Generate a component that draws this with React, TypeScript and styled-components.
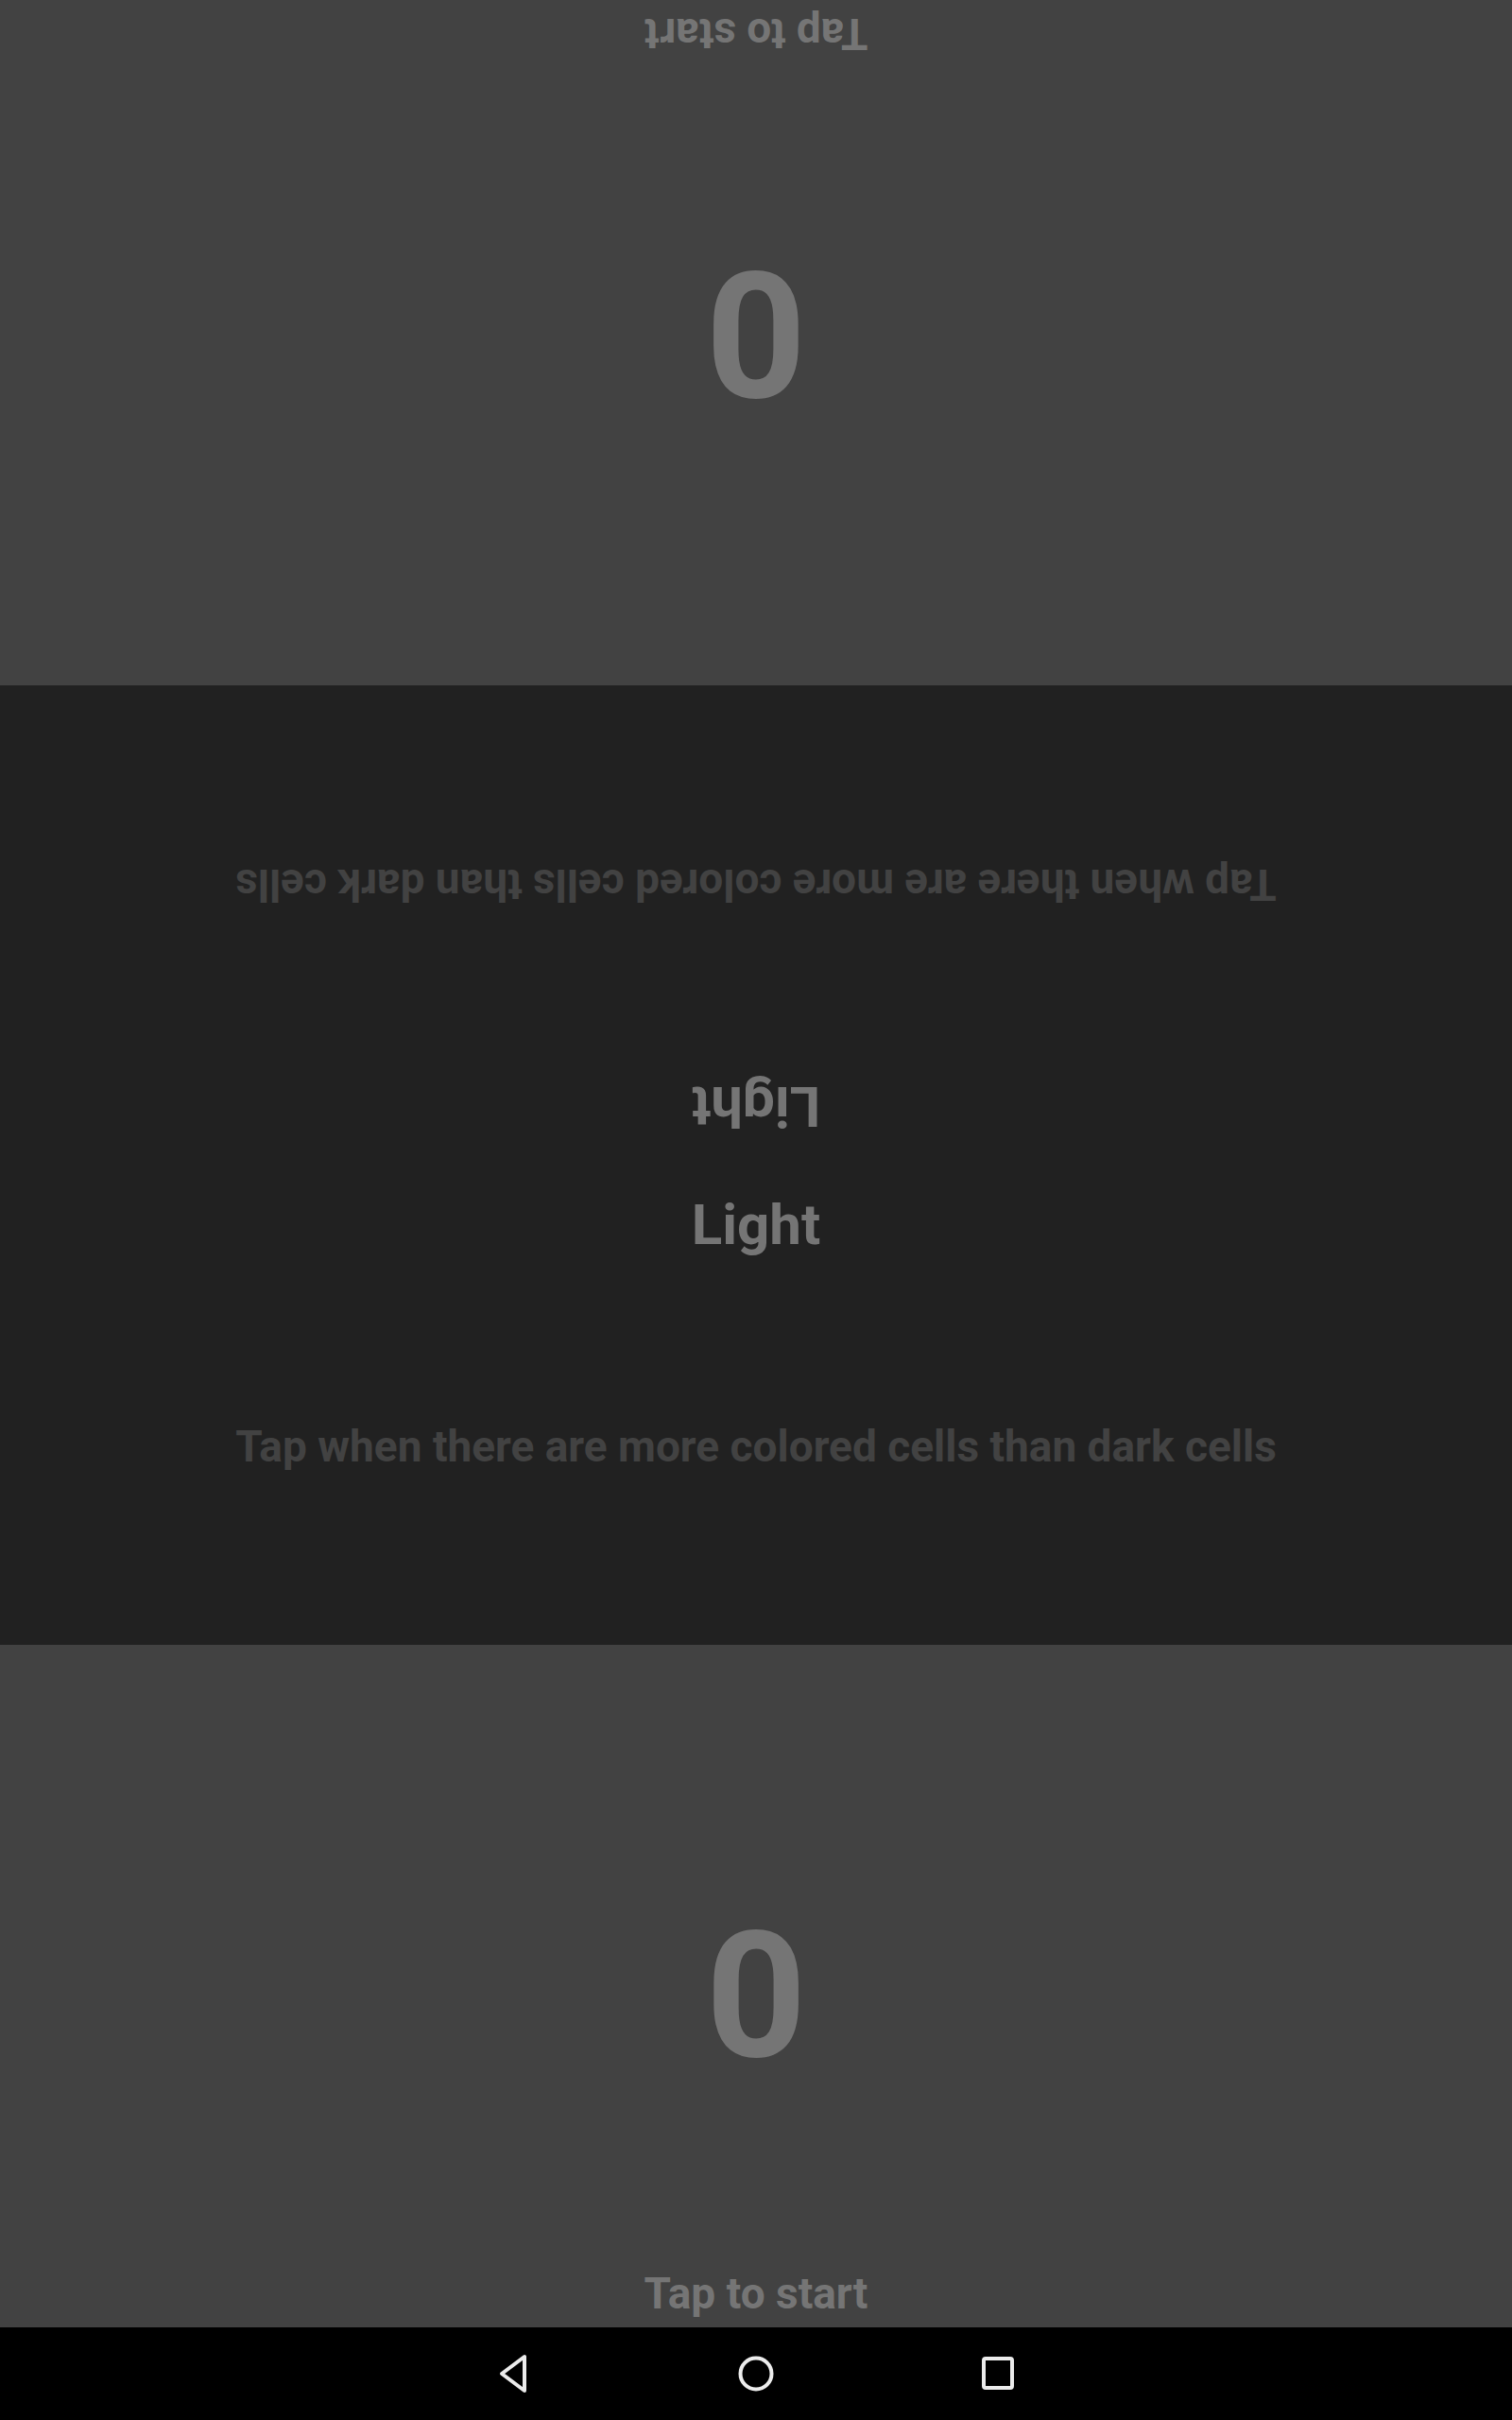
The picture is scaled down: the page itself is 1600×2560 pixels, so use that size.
import React from 'react';
import styled, { createGlobalStyle } from 'styled-components';

const GlobalStyle = createGlobalStyle`
  html, body {
    margin: 0;
    padding: 0;
    background: #000;
  }
  body {
    font-family: Roboto, "Noto Sans", "Liberation Sans", sans-serif;
  }
`;

const Screen = styled.div`
  width: 1600px;
  height: 2560px;
  display: flex;
  flex-direction: column;
  overflow: hidden;
`;

const PlayerPanel = styled.div<{ flipped?: boolean; size: number }>`
  height: ${p => p.size}px;
  flex-shrink: 0;
  box-sizing: border-box;
  background: #424242;
  display: grid;
  grid-template-rows: 1fr auto 1fr;
  justify-items: center;
  padding-top: 20px;
  transform: ${p => (p.flipped ? 'rotate(180deg)' : 'none')};
`;

const Score = styled.div`
  grid-row: 2;
  font-size: 186px;
  font-weight: 700;
  color: #757575;
  line-height: normal;
`;

const StartHint = styled.div`
  grid-row: 3;
  align-self: end;
  padding-bottom: 9px;
  font-size: 46px;
  font-weight: 700;
  color: #757575;
`;

const Board = styled.div`
  height: 1015px;
  flex-shrink: 0;
  background: #212121;
  display: flex;
  flex-direction: column;
`;

const BoardHalf = styled.div<{ flipped?: boolean }>`
  flex: 1;
  display: flex;
  flex-direction: column;
  align-items: center;
  padding-top: 27px;
  transform: ${p => (p.flipped ? 'rotate(180deg)' : 'none')};
`;

const Mode = styled.div`
  font-size: 60px;
  font-weight: 700;
  color: #757575;
`;

const Instruction = styled.div`
  margin-top: 172px;
  font-size: 46px;
  font-weight: 700;
  color: #424242;
  white-space: nowrap;
`;

const NavBar = styled.div`
  height: 98px;
  flex-shrink: 0;
  background: #000;
  display: flex;
  justify-content: center;
  align-items: center;
`;

const NavButton = styled.div`
  width: 256px;
  height: 98px;
  display: flex;
  align-items: center;
  justify-content: center;
`;

const NavIcon = styled.svg`
  width: 44px;
  height: 44px;
  fill: none;
  stroke: #ececec;
  stroke-width: 4;
  stroke-linejoin: round;
`;

function Player({ flipped, size }: { flipped?: boolean; size: number }) {
  return (
    <PlayerPanel flipped={flipped} size={size}>
      <Score>0</Score>
      <StartHint>Tap to start</StartHint>
    </PlayerPanel>
  );
}

function Half({ flipped }: { flipped?: boolean }) {
  return (
    <BoardHalf flipped={flipped}>
      <Mode>Light</Mode>
      <Instruction>Tap when there are more colored cells than dark cells</Instruction>
    </BoardHalf>
  );
}

export default function App() {
  return (
    <>
      <GlobalStyle />
      <Screen>
        <Player flipped size={725} />
        <Board>
          <Half flipped />
          <Half />
        </Board>
        <Player size={722} />
        <NavBar>
          <NavButton>
            <NavIcon viewBox="0 0 44 44">
              <path d="M33 4 L33 40 L9 22 Z" />
            </NavIcon>
          </NavButton>
          <NavButton>
            <NavIcon viewBox="0 0 44 44">
              <circle cx="22" cy="22" r="16.5" />
            </NavIcon>
          </NavButton>
          <NavButton>
            <NavIcon viewBox="0 0 44 44">
              <rect x="7" y="6" width="30" height="31" rx="2" />
            </NavIcon>
          </NavButton>
        </NavBar>
      </Screen>
    </>
  );
}
